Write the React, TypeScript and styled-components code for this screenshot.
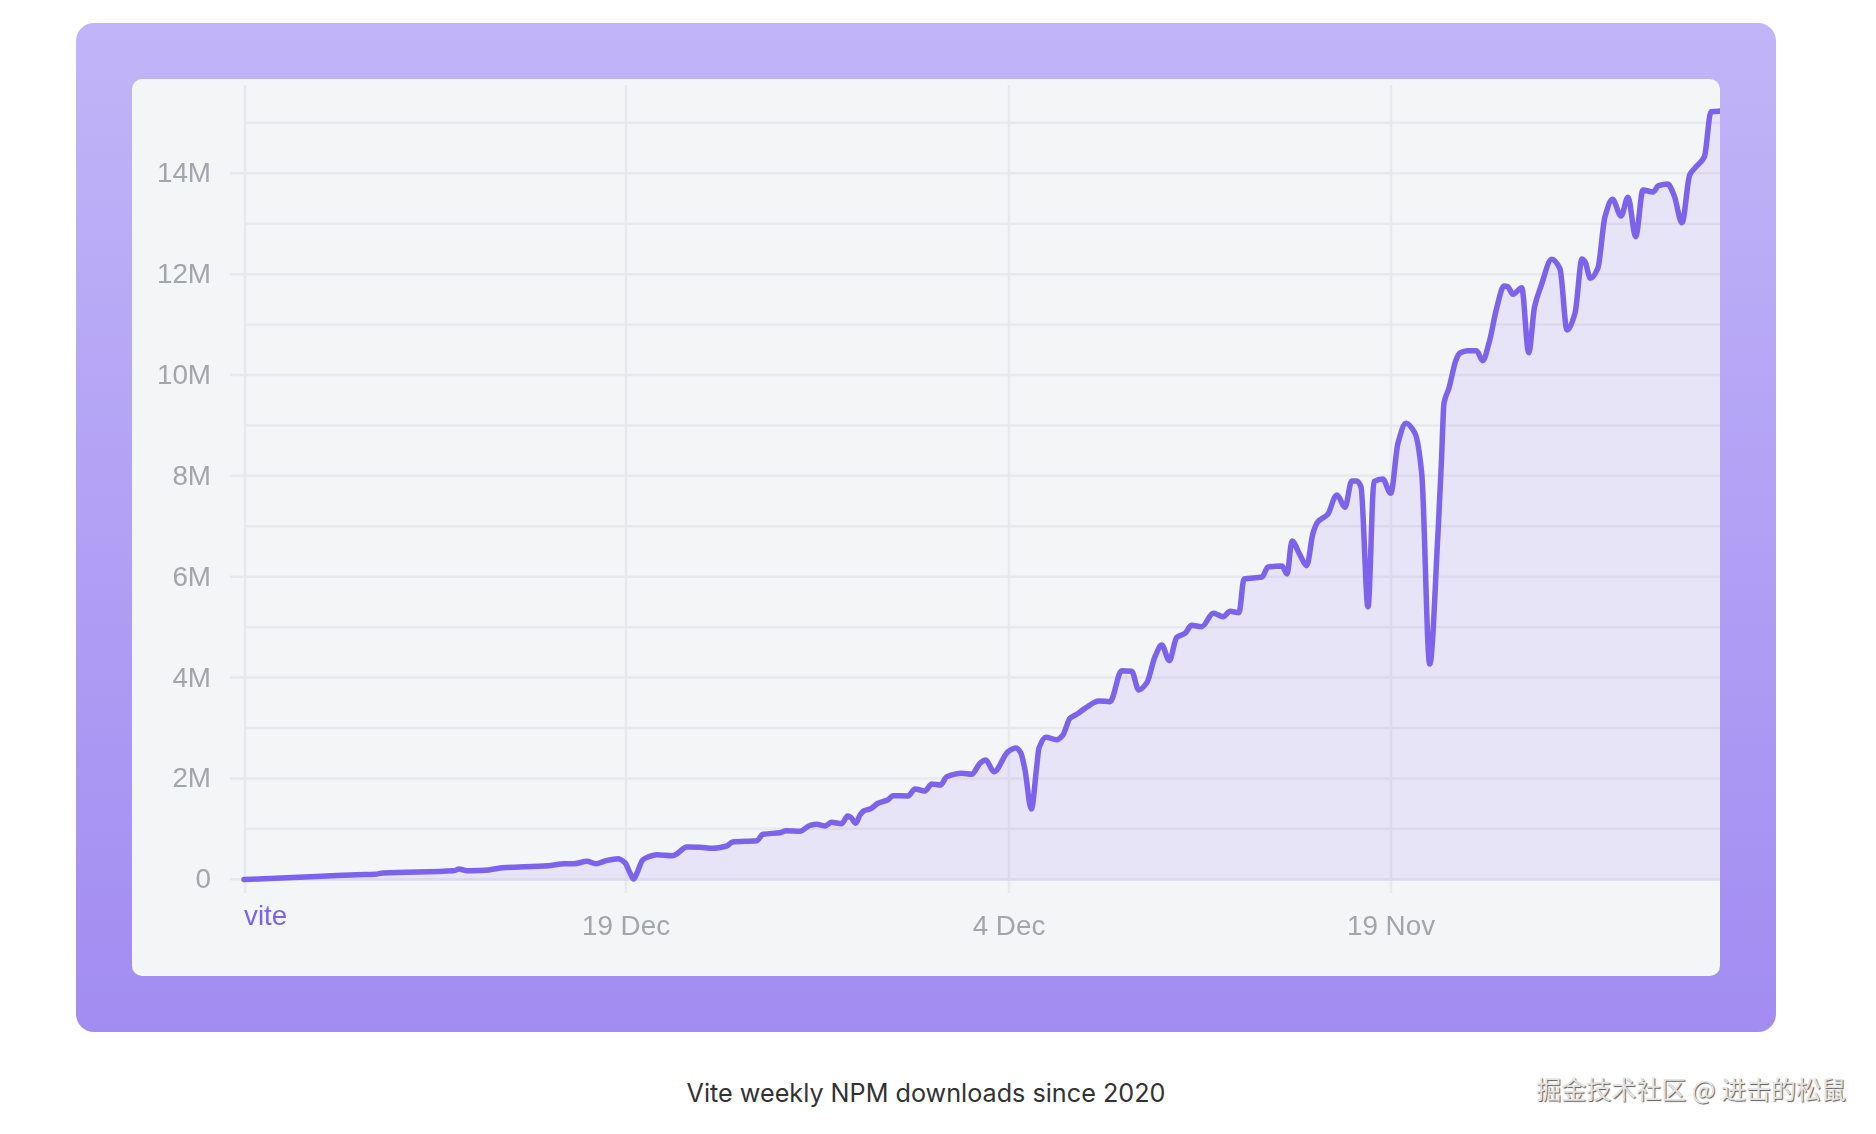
import React from 'react';
import styled, { createGlobalStyle } from 'styled-components';

const GlobalStyle = createGlobalStyle`
  html, body {
    margin: 0;
    padding: 0;
    background: #fff;
  }
`;

const Page = styled.div`
  position: relative;
  width: 1876px;
  height: 1134px;
  padding: 23px 100px 0 76px;
  box-sizing: border-box;
  overflow: hidden;
`;

const Card = styled.div`
  height: 1009px;
  padding: 56px;
  box-sizing: border-box;
  border-radius: 18px;
  background: linear-gradient(180deg, #c1b5f8 0%, #a28cf1 100%);
`;

const Panel = styled.div`
  height: 100%;
  border-radius: 10px;
  background: #f3f5f7;
  overflow: hidden;
`;

const ChartSvg = styled.svg`
  display: block;
  width: 100%;
  height: 100%;
  filter: blur(0.5px);
`;

const GridLine = styled.line`
  stroke: #e8e9ed;
  stroke-width: 2.5;
`;

const AxisLabel = styled.text<{ $accent?: boolean }>`
  font-family: "Liberation Sans", Arial, sans-serif;
  font-size: 27.8px;
  fill: ${({ $accent }) => ($accent ? '#7c63ea' : '#a1a5ac')};
`;

const Area = styled.path`
  fill: #8b6cf0;
  fill-opacity: 0.12;
`;

const Line = styled.path`
  fill: none;
  stroke: #7d63ec;
  stroke-width: 5.5;
  stroke-linecap: round;
  stroke-linejoin: round;
`;

const Caption = styled.div`
  margin-top: 46px;
  text-align: center;
  font-family: Inter, "Liberation Sans", sans-serif;
  font-size: 25.2px;
  line-height: 30px;
  color: #333;
`;

const Watermark = styled.div`
  position: absolute;
  right: 30px;
  top: 1071px;
  font-family: "Noto Sans CJK SC", sans-serif;
  font-size: 25px;
  line-height: 34px;
  white-space: nowrap;
  color: #e4e4e4;
  text-shadow: 1px 1px 1px rgba(0, 0, 0, 0.65);
`;

// page pixel coords, traced from the chart
const points: [number, number][] = [
  [244, 879.5], [316, 876.5], [357, 874.7], [375, 874.2], [383, 873], [454, 870.7], [459, 869], [467, 870.7],
  [485, 870.3], [502, 867.7], [548, 865.7], [564, 863.7], [574, 863.7], [587, 861.3], [596, 863.7], [605, 861],
  [618, 858.7], [625, 862.7], [630, 873], [633.7, 879], [637, 873], [642.7, 860], [648, 857], [656.7, 854.7],
  [672.7, 855.7], [676.7, 854], [686.7, 847], [700, 847.3], [713, 848.3], [726.7, 846], [732.7, 842],
  [756.7, 840.7], [763, 834.3], [780, 832.7], [786, 830.7], [800, 831.3], [810, 825.3], [816.7, 824.3],
  [825, 826], [831.7, 822.3], [841.7, 823.7], [847.7, 816], [850.7, 817.3], [855.7, 823.3], [860, 815],
  [864, 810.7], [870.7, 808.7], [878, 803.3], [888, 799.7], [893, 795.7], [908, 796], [915, 789], [925, 791],
  [931.7, 784], [940.7, 785], [946.7, 776.7], [961.7, 773.3], [971.7, 774.3], [980, 763.3], [985.7, 760],
  [994, 771.7], [1008, 751.7], [1016, 748], [1020.7, 752.7], [1025, 770], [1031.3, 809], [1036.7, 766.7],
  [1039, 748], [1046, 737.3], [1056.7, 739.7], [1062.7, 735.3], [1070, 718.3], [1076.7, 714.3], [1085, 708.3],
  [1099, 701], [1110, 701.7], [1121.7, 670.7], [1131.7, 671.3], [1138.7, 690], [1146.7, 683], [1155, 656.7],
  [1161.7, 645], [1169.3, 660.7], [1176.7, 637.3], [1185, 633.3], [1191.7, 625.3], [1201.7, 626.7],
  [1213.3, 613.3], [1223.3, 616.7], [1230, 611.3], [1239, 612.7], [1244, 579], [1262, 577], [1268, 567],
  [1282, 566], [1287, 574], [1292, 541], [1300, 555], [1306.7, 565.7], [1313, 533], [1318, 521.7], [1328, 514],
  [1335, 496.7], [1337, 495], [1345, 507.3], [1351.7, 481], [1356.7, 481], [1361, 487], [1368, 606.7],
  [1374, 481.7], [1382.7, 479], [1390.7, 493.3], [1398, 443], [1406, 423.3], [1415, 433.3], [1421.7, 473.3],
  [1429.7, 664], [1438, 533], [1441.5, 460], [1444, 403], [1449, 388], [1456, 360], [1460, 353], [1467, 350.7],
  [1476.5, 350.7], [1482.7, 360.7], [1489, 343], [1496.7, 308], [1504, 286], [1507.7, 286.7], [1513, 294.3],
  [1521.7, 287.7], [1528.7, 352.7], [1534.6, 306.7], [1540.8, 286.7], [1551.8, 259.3], [1560, 269], [1567, 330],
  [1575, 313.3], [1582, 259], [1585, 261.7], [1590.4, 278.3], [1597.8, 268.3], [1605, 216.7], [1612.5, 199.3],
  [1621, 216], [1628, 197.3], [1635.7, 236.7], [1643, 190], [1653, 192], [1658.5, 185.7], [1667.6, 184],
  [1674, 195], [1682, 222.7], [1689.7, 175], [1695, 168], [1704.4, 156.7], [1711, 111.7], [1722, 111],
];

// monotone cubic so peaks stay rounded without overshooting
const buildCurve = (pts: [number, number][]) => {
  const slopes = pts.slice(1).map(([x, y], i) => (y - pts[i][1]) / (x - pts[i][0]));
  const tangents = pts.map((_, i) => {
    if (i === 0) return slopes[0];
    if (i === pts.length - 1) return slopes[i - 1];
    const a = slopes[i - 1];
    const b = slopes[i];
    return a * b <= 0 ? 0 : (2 * a * b) / (a + b);
  });
  let d = `M${pts[0][0]} ${pts[0][1]}`;
  for (let i = 1; i < pts.length; i++) {
    const [x0, y0] = pts[i - 1];
    const [x1, y1] = pts[i];
    const h = (x1 - x0) / 3;
    d += `C${(x0 + h).toFixed(1)} ${(y0 + tangents[i - 1] * h).toFixed(1)} ${(x1 - h).toFixed(1)} ${(y1 - tangents[i] * h).toFixed(1)} ${x1} ${y1}`;
  }
  return d;
};

const yFor = (millions: number) => 879.3 - 50.43 * millions;
const steps = Array.from({ length: 16 }, (_, i) => i);
const dates = [
  { x: 626, label: '19 Dec' },
  { x: 1009, label: '4 Dec' },
  { x: 1391, label: '19 Nov' },
];

const curve = buildCurve(points);

const DownloadsChart: React.FC = () => (
  <ChartSvg viewBox="132 79 1588 897">
    {[245, ...dates.map((d) => d.x)].map((x) => (
      <GridLine key={x} x1={x} x2={x} y1={85} y2={893} />
    ))}
    {steps.map((v) => (
      <GridLine key={v} x1={v % 2 === 0 ? 230 : 246} x2={1722} y1={yFor(v)} y2={yFor(v)} />
    ))}
    <Area d={`${curve}L1722 881L244 881Z`} />
    <Line d={curve} />
    {steps
      .filter((v) => v % 2 === 0)
      .map((v) => (
        <AxisLabel key={v} x={211} y={yFor(v) + 9} textAnchor="end">
          {v === 0 ? '0' : `${v}M`}
        </AxisLabel>
      ))}
    <AxisLabel $accent x={244} y={925}>
      vite
    </AxisLabel>
    {dates.map((d) => (
      <AxisLabel key={d.label} x={d.x} y={935} textAnchor="middle">
        {d.label}
      </AxisLabel>
    ))}
  </ChartSvg>
);

export default function App() {
  return (
    <Page>
      <GlobalStyle />
      <Card>
        <Panel>
          <DownloadsChart />
        </Panel>
      </Card>
      <Caption>Vite weekly NPM downloads since 2020</Caption>
      <Watermark>掘金技术社区 @ 进击的松鼠</Watermark>
    </Page>
  );
}
